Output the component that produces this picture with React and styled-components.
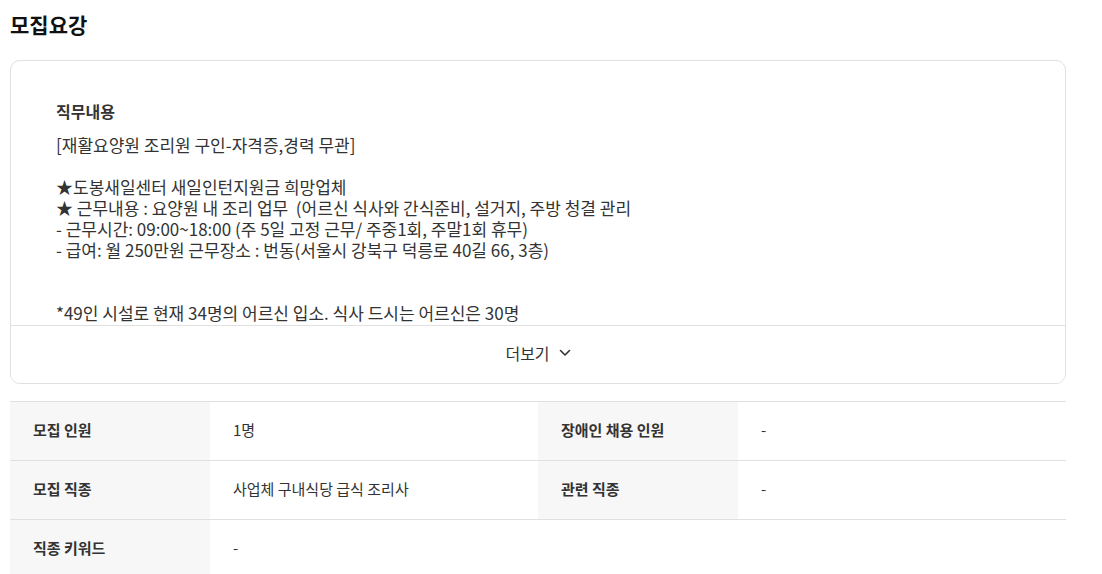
import React from 'react';
import styled, { createGlobalStyle } from 'styled-components';

const GlobalStyle = createGlobalStyle`
  body {
    margin: 0;
    background: #fff;
    font-family: "Noto Sans CJK KR", "Noto Sans", sans-serif;
    color: #333;
  }
`;

const Page = styled.div`
  padding: 0 36px 0 10px;
`;

const Title = styled.h2`
  margin: 0;
  padding-top: 10px;
  font-size: 21px;
  line-height: 28px;
  font-weight: 700;
  color: #111;
`;

const Card = styled.div`
  margin-top: 22px;
  border: 1px solid #e0e0e0;
  border-radius: 10px;
  overflow: hidden;
`;

const Detail = styled.div`
  height: 264px;
  overflow: hidden;
  padding: 40px 45px 0;
  box-sizing: border-box;
  font-size: 17px;
  line-height: 21px;
  color: #333;
`;

const DetailHead = styled.div`
  font-size: 16px;
  font-weight: 700;
  margin-bottom: 12px;
`;

const Line = styled.div`
  white-space: pre;
  min-height: 21px;
`;

const MoreButton = styled.button`
  display: flex;
  align-items: center;
  justify-content: center;
  gap: 9px;
  width: 100%;
  height: 58px;
  padding: 0 0 4px;
  border: 0;
  border-top: 1px solid #e0e0e0;
  background: #fff;
  font-family: inherit;
  font-size: 16px;
  color: #333;
  cursor: pointer;
`;

const Table = styled.div`
  margin-top: 17px;
  border-top: 1px solid #e0e0e0;
  display: grid;
  grid-template-columns: 200px 328px 200px 1fr;
`;

const Cell = styled.div`
  box-sizing: border-box;
  height: 59px;
  display: flex;
  align-items: center;
  padding: 0 0 4px 23px;
  background: ${(p) => (p.$label ? '#f7f7f7' : '#fff')};
  font-size: 15px;
  font-weight: ${(p) => (p.$label ? 700 : 400)};
  color: #333;
  border-bottom: ${(p) => (p.$last ? '0' : '1px solid #e0e0e0')};
`;

const lines = [
  '[재활요양원 조리원 구인-자격증,경력 무관]',
  '',
  '★도봉새일센터 새일인턴지원금 희망업체',
  '★ 근무내용 : 요양원 내 조리 업무  (어르신 식사와 간식준비, 설거지, 주방 청결 관리',
  '- 근무시간: 09:00~18:00 (주 5일 고정 근무/ 주중1회, 주말1회 휴무)',
  '- 급여: 월 250만원 근무장소 : 번동(서울시 강북구 덕릉로 40길 66, 3층)',
  '',
  '',
  '*49인 시설로 현재 34명의 어르신 입소. 식사 드시는 어르신은 30명',
  '',
];

const Chevron = () => (
  <svg width="12" height="8" viewBox="0 0 12 8" fill="none">
    <path d="M1.5 1.5l4.5 4.5 4.5-4.5" stroke="#333" strokeWidth="1.6" strokeLinecap="round" strokeLinejoin="round" />
  </svg>
);

export default function App() {
  return (
    <Page>
      <GlobalStyle />
      <Title>모집요강</Title>
      <Card>
        <Detail>
          <DetailHead>직무내용</DetailHead>
          {lines.map((l, i) => (
            <Line key={i}>{l}</Line>
          ))}
        </Detail>
        <MoreButton>
          더보기 <Chevron />
        </MoreButton>
      </Card>
      <Table>
        <Cell $label>모집 인원</Cell>
        <Cell>1명</Cell>
        <Cell $label>장애인 채용 인원</Cell>
        <Cell>-</Cell>
        <Cell $label>모집 직종</Cell>
        <Cell>사업체 구내식당 급식 조리사</Cell>
        <Cell $label>관련 직종</Cell>
        <Cell>-</Cell>
        <Cell $label $last>직종 키워드</Cell>
        <Cell $last>-</Cell>
      </Table>
    </Page>
  );
}
